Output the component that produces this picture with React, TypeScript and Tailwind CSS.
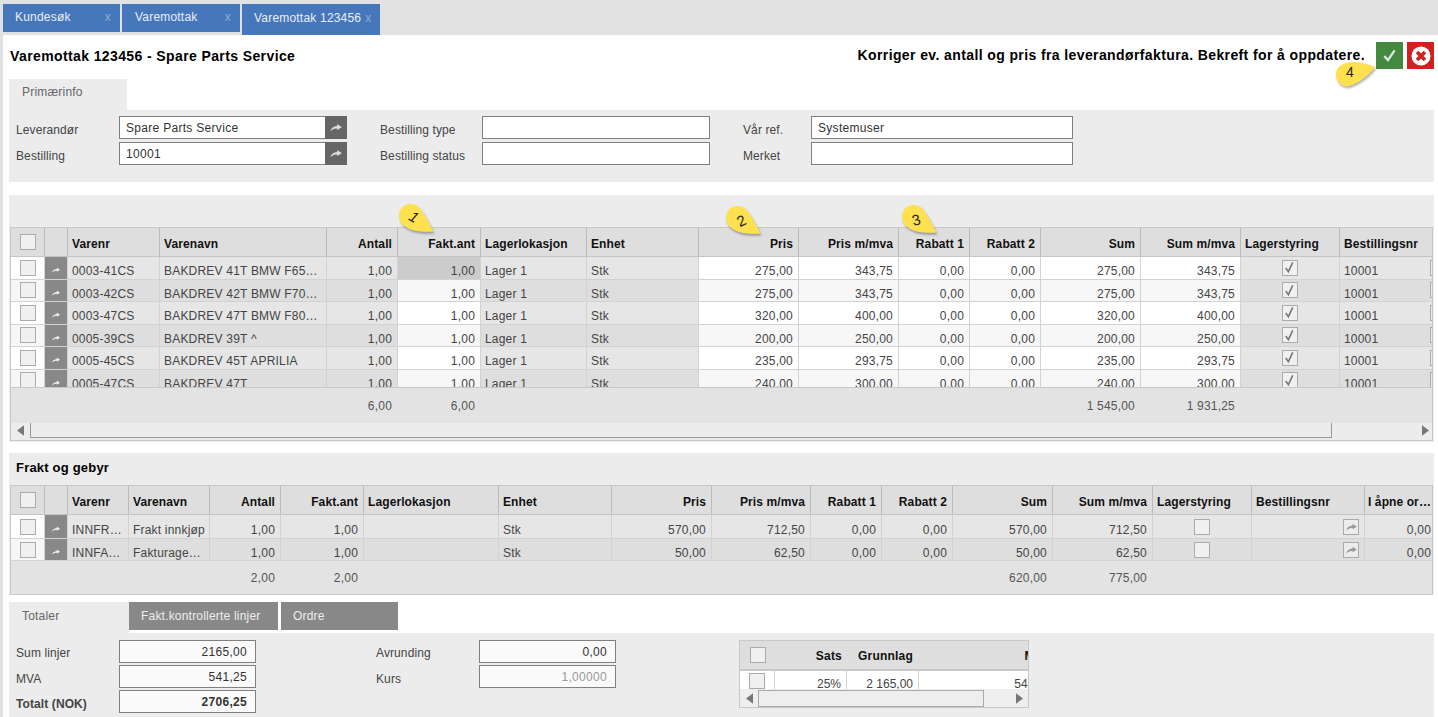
import type { ReactNode } from "react";

type Col = { label: string; w: string; align?: "right" | "center"; edit?: boolean };

const mainCols: Col[] = [
  { label: "Varenr", w: "w-[92px]" },
  { label: "Varenavn", w: "w-[167px]" },
  { label: "Antall", w: "w-[71px]", align: "right" },
  { label: "Fakt.ant", w: "w-[83px]", align: "right", edit: true },
  { label: "Lagerlokasjon", w: "w-[106px]" },
  { label: "Enhet", w: "w-[112px]" },
  { label: "Pris", w: "w-[100px]", align: "right", edit: true },
  { label: "Pris m/mva", w: "w-[100px]", align: "right", edit: true },
  { label: "Rabatt 1", w: "w-[71px]", align: "right", edit: true },
  { label: "Rabatt 2", w: "w-[71px]", align: "right", edit: true },
  { label: "Sum", w: "w-[100px]", align: "right", edit: true },
  { label: "Sum m/mva", w: "w-[100px]", align: "right", edit: true },
  { label: "Lagerstyring", w: "w-[99px]", align: "center" },
  { label: "Bestillingsnr", w: "w-[112px]" },
];

const feeCols: Col[] = [
  { label: "Varenr", w: "w-[61px]" },
  { label: "Varenavn", w: "w-[81px]" },
  { label: "Antall", w: "w-[71px]", align: "right" },
  { label: "Fakt.ant", w: "w-[83px]", align: "right" },
  { label: "Lagerlokasjon", w: "w-[135px]" },
  { label: "Enhet", w: "w-[113px]" },
  { label: "Pris", w: "w-[100px]", align: "right" },
  { label: "Pris m/mva", w: "w-[99px]", align: "right" },
  { label: "Rabatt 1", w: "w-[71px]", align: "right" },
  { label: "Rabatt 2", w: "w-[71px]", align: "right" },
  { label: "Sum", w: "w-[100px]", align: "right" },
  { label: "Sum m/mva", w: "w-[100px]", align: "right" },
  { label: "Lagerstyring", w: "w-[99px]", align: "center" },
  { label: "Bestillingsnr", w: "w-[113px]" },
  { label: "I åpne or…", w: "w-[72px]", align: "right" },
];

const mainRows = [
  ["0003-41CS", "BAKDREV 41T BMW F65…", "1,00", "1,00", "Lager 1", "Stk", "275,00", "343,75", "0,00", "0,00", "275,00", "343,75", "x", "10001"],
  ["0003-42CS", "BAKDREV 42T BMW F70…", "1,00", "1,00", "Lager 1", "Stk", "275,00", "343,75", "0,00", "0,00", "275,00", "343,75", "x", "10001"],
  ["0003-47CS", "BAKDREV 47T BMW F80…", "1,00", "1,00", "Lager 1", "Stk", "320,00", "400,00", "0,00", "0,00", "320,00", "400,00", "x", "10001"],
  ["0005-39CS", "BAKDREV 39T ^", "1,00", "1,00", "Lager 1", "Stk", "200,00", "250,00", "0,00", "0,00", "200,00", "250,00", "x", "10001"],
  ["0005-45CS", "BAKDREV 45T APRILIA", "1,00", "1,00", "Lager 1", "Stk", "235,00", "293,75", "0,00", "0,00", "235,00", "293,75", "x", "10001"],
  ["0005-47CS", "BAKDREV 47T", "1,00", "1,00", "Lager 1", "Stk", "240,00", "300,00", "0,00", "0,00", "240,00", "300,00", "x", "10001"],
];

const feeRows = [
  ["INNFR…", "Frakt innkjøp", "1,00", "1,00", "", "Stk", "570,00", "712,50", "0,00", "0,00", "570,00", "712,50", "o", "", "0,00"],
  ["INNFA…", "Fakturage…", "1,00", "1,00", "", "Stk", "50,00", "62,50", "0,00", "0,00", "50,00", "62,50", "o", "", "0,00"],
];

const mainFoot = ["", "", "6,00", "6,00", "", "", "", "", "", "", "1 545,00", "1 931,25", "", ""];
const feeFoot = ["", "", "2,00", "2,00", "", "", "", "", "", "", "620,00", "775,00", "", "", ""];

function Share({ className }: { className: string }) {
  return (
    <svg viewBox="0 0 14 10" className={className} fill="currentColor">
      <path d="M.6 9.6C1 6 3.6 3.6 8.4 3.2V1L13.8 4.6 8.4 8V6.2C5.2 5.8 2.6 7 .6 9.6Z" />
    </svg>
  );
}

function Box({ checked }: { checked?: boolean }) {
  return (
    <div className="flex h-4 w-4 shrink-0 items-center justify-center border border-[#ababab] bg-[#f0f0f0]">
      {checked && (
        <svg viewBox="0 0 14 14" className="h-[13px] w-[13px] text-[#777]" fill="none" stroke="currentColor" strokeWidth="1.7">
          <path d="M3 7.5 5.8 11.5 10.5 1.5" />
        </svg>
      )}
    </div>
  );
}

function cellAlign(align?: string) {
  if (align === "right") return "justify-end text-right";
  if (align === "center") return "justify-center";
  return "justify-start";
}

function HeaderRow({ cols }: { cols: Col[] }) {
  return (
    <div className="flex h-[29px] w-max border-b-[1px] border-[#c4c4c4] bg-[#dedede]">
      <div className="flex w-[34px] shrink-0 items-center justify-center border-r border-[#bbb] pb-[1px]">
        <Box />
      </div>
      <div className="w-[23px] shrink-0 border-r border-[#bbb]" />
      {cols.map((c) => (
        <div
          key={c.label}
          className={`${c.w} flex shrink-0 items-center border-r border-[#bbb] pl-[4px] pr-[5px] pt-[4px] font-bold text-[#111] ${cellAlign(c.align === "center" ? undefined : c.align)}`}
        >
          <span className="whitespace-nowrap tracking-[0.1px]">{c.label}</span>
        </div>
      ))}
    </div>
  );
}

function GridRow({ cols, row, i, h, selected }: { cols: Col[]; row: string[]; i: number; h: string; selected?: number }) {
  const odd = i % 2 === 0;
  return (
    <div className={`flex w-max ${h} border-b border-[#d2d2d2]`}>
      <div className={`flex w-[34px] shrink-0 items-center justify-center border-r border-[#d2d2d2] ${odd ? "bg-white" : "bg-[#f7f7f7]"}`}>
        <Box />
      </div>
      <div className="flex w-[23px] shrink-0 items-center justify-center border-r border-[#d2d2d2] bg-[#888] pt-[5px] text-[#eee]">
        <Share className="h-[6px] w-[10px]" />
      </div>
      {cols.map((c, n) => {
        const bg = selected === n ? "bg-[#cccccc]" : c.edit ? (odd ? "bg-white" : "bg-[#f7f7f7]") : odd ? "bg-[#e6e6e6]" : "bg-[#dedede]";
        const v = row[n];
        return (
          <div key={c.label} className={`${c.w} ${bg} flex shrink-0 items-center border-r border-[#d2d2d2] pl-[4px] pr-[5px] text-[#444] ${cellAlign(c.align)}`}>
            {v === "x" || v === "o" ? (
              <Box checked={v === "x"} />
            ) : (
              <span className="whitespace-nowrap pt-[7px] tracking-[0.2px]">{v}</span>
            )}
            {c.label === "Bestillingsnr" && (
              <div className="ml-auto flex h-4 w-4 shrink-0 items-center justify-center border border-[#aaa] bg-[#ececec] text-[#999]">
                <Share className="h-[8px] w-[11px]" />
              </div>
            )}
          </div>
        );
      })}
    </div>
  );
}

function FootRow({ cols, values, h }: { cols: Col[]; values: string[]; h: string }) {
  return (
    <div className={`flex w-max ${h} bg-[#e3e3e3]`}>
      <div className="w-[57px] shrink-0" />
      {cols.map((c, n) => (
        <div key={c.label} className={`${c.w} flex shrink-0 items-center justify-end pr-[6px] text-[#555]`}>
          <span className="whitespace-nowrap tracking-[0.2px]">{values[n]}</span>
        </div>
      ))}
    </div>
  );
}

function Arrow({ left }: { left?: boolean }) {
  return (
    <svg viewBox="0 0 8 12" className="h-[11px] w-[7px] text-[#777]" fill="currentColor">
      <path d={left ? "M8 0V12L0 6Z" : "M0 0V12L8 6Z"} />
    </svg>
  );
}

function Annotation({ pos, children, digit }: { pos: string; children: ReactNode; digit: string }) {
  return (
    <div className={`absolute ${pos} h-[31px] w-[37px]`}>
      <svg viewBox="0 0 37 31" className="h-full w-full drop-shadow-[1px_2px_1px_rgba(0,0,0,0.3)]">
        <path d="M35.5 28.5C26 29.5 14 28.5 7 23.5 0 18.5-.5 9.5 4 4.5 9-.5 17 0 21 4.5 27 11 31 20 35.5 28.5Z" fill="#ffe04f" />
      </svg>
      <span className={`absolute text-[15px] leading-none text-[#222] ${digit}`}>{children}</span>
    </div>
  );
}

function Field({ value, arrow, right, bold, dim }: { value?: string; arrow?: boolean; right?: boolean; bold?: boolean; dim?: boolean }) {
  return (
    <div className={`flex h-[23px] border border-[#808080] ${right ? "bg-[#fafafa]" : "bg-white"}`}>
      <div className={`flex-1 truncate pl-[6px] pt-[2px] leading-[19px] tracking-[0.3px] ${right ? "pr-[8px] text-right" : "pr-[6px]"} ${bold ? "font-bold" : ""} ${dim ? "text-[#999]" : "text-[#333]"}`}>
        {value}
      </div>
      {arrow && (
        <div className="flex w-[22px] -my-px -mr-px items-center justify-center bg-[#666] text-[#ddd]">
          <Share className="h-[9px] w-[12px]" />
        </div>
      )}
    </div>
  );
}

function Label({ children, bold, className }: { children: ReactNode; bold?: boolean; className?: string }) {
  return (
    <div className={`flex h-[23px] items-center pt-[4px] tracking-[0.1px] text-[#444] ${bold ? "font-bold text-[#222]" : ""} ${className ?? ""}`}>
      {children}
    </div>
  );
}

export default function App() {
  return (
    <div className="relative flex h-[717px] w-[1438px] flex-col overflow-hidden bg-[#e2e2e2] font-['Liberation_Sans',Arial,sans-serif] text-[12px]">
      <div className="flex h-[35px] shrink-0 items-start gap-[2px] pl-[3px] pt-[4px] text-[#e8eef8] tracking-[0.2px]">
        <div className="flex h-[28px] w-[117px] items-center justify-between bg-[#4677bb] pb-[2px] pl-[12px] pr-[9px]">
          <span>Kundesøk</span>
          <span className="text-[#8fabd6]">x</span>
        </div>
        <div className="flex h-[28px] w-[118px] items-center justify-between bg-[#4677bb] pb-[2px] pl-[13px] pr-[9px]">
          <span>Varemottak</span>
          <span className="text-[#8fabd6]">x</span>
        </div>
        <div className="flex h-[31px] w-[138px] items-center gap-[4px] bg-[#4677bb] pb-[4px] pl-[12px]">
          <span>Varemottak 123456</span>
          <span className="text-[#8fabd6]">x</span>
        </div>
      </div>

      <div className="ml-[3px] flex min-h-0 flex-1 flex-col bg-white pl-[6px] pr-[4px]">
        <div className="flex h-[44px] shrink-0 items-start justify-between pt-[7px]">
          <h1 className="pl-px pt-[5px] text-[14px] font-bold leading-[18px] tracking-[0.39px] text-black">
            Varemottak 123456 - Spare Parts Service
          </h1>
          <div className="flex items-center">
            <span className="mr-[11px] text-[14px] font-bold tracking-[0.39px] text-black">
              Korriger ev. antall og pris fra leverandørfaktura. Bekreft for å oppdatere.
            </span>
            <div className="flex h-[27px] w-[27px] items-center justify-center bg-[#43893f] text-[#e0ebde]">
              <svg viewBox="0 0 16 16" className="h-[15px] w-[15px]" fill="none" stroke="currentColor" strokeWidth="2.4">
                <path d="M2.5 8.5 6.3 13 13.5 2.5" />
              </svg>
            </div>
            <div className="ml-[4px] flex h-[27px] w-[27px] items-center justify-center bg-[#d02020]">
              <svg viewBox="0 0 20 20" className="h-[20px] w-[20px]">
                <circle cx="10" cy="10" r="9.5" fill="#fff" />
                <path d="M6 6 14 14M14 6 6 14" stroke="#d02020" strokeWidth="3.6" />
              </svg>
            </div>
          </div>
        </div>

        <div className="flex h-[31px] w-[118px] shrink-0 items-center bg-[#ececec] pb-[6px] pl-[13px] tracking-[0.2px] text-[#666]">
          Primærinfo
        </div>
        <div className="grid h-[72px] shrink-0 grid-cols-[103px_228px_102px_228px_68px_262px] content-start gap-y-[3px] bg-[#ececec] pl-[7px] pt-[6px]">
          <Label>Leverandør</Label>
          <Field value="Spare Parts Service" arrow />
          <Label className="ml-[33px] -mr-[33px]">Bestilling type</Label>
          <div className="ml-[33px] -mr-[33px]"><Field /></div>
          <Label className="ml-[66px] -mr-[66px]">Vår ref.</Label>
          <div className="ml-[66px] -mr-[66px]"><Field value="Systemuser" /></div>
          <Label>Bestilling</Label>
          <Field value="10001" arrow />
          <Label className="ml-[33px] -mr-[33px]">Bestilling status</Label>
          <div className="ml-[33px] -mr-[33px]"><Field /></div>
          <Label className="ml-[66px] -mr-[66px]">Merket</Label>
          <div className="ml-[66px] -mr-[66px]"><Field /></div>
        </div>

        <div className="mt-[13px] h-[247px] shrink-0 bg-[#ececec] px-px pt-[32px]">
          <div className="h-[214px] overflow-hidden border border-[#c8c8c8]">
            <HeaderRow cols={mainCols} />
            <div className="h-[130px] overflow-hidden">
              {mainRows.map((row, i) => (
                <GridRow key={row[0]} cols={mainCols} row={row} i={i} h="h-[22.5px]" selected={i === 0 ? 3 : undefined} />
              ))}
            </div>
            <div className="border-t border-[#c8c8c8]">
              <FootRow cols={mainCols} values={mainFoot} h="h-[35px]" />
            </div>
            <div className="flex h-[17px] items-start">
              <div className="flex h-[15px] w-[19px] items-center justify-center"><Arrow left /></div>
              <div className="h-[15px] w-[1302px] border-x border-b border-[#999]" />
              <div className="flex h-[15px] flex-1 items-center justify-end pr-[3px]"><Arrow /></div>
            </div>
          </div>
        </div>

        <div className="mt-[11px] h-[142px] shrink-0 bg-[#ececec] px-px">
          <div className="flex h-[32px] items-center pb-[3px] pl-[6px] text-[13px] font-bold tracking-[0.2px] text-black">Frakt og gebyr</div>
          <div className="h-[110px] overflow-hidden border border-[#c8c8c8]">
            <HeaderRow cols={feeCols} />
            <GridRow cols={feeCols} row={feeRows[0]} i={0} h="h-[24px]" />
            <GridRow cols={feeCols} row={feeRows[1]} i={1} h="h-[22px]" />
            <FootRow cols={feeCols} values={feeFoot} h="h-[33px]" />
          </div>
        </div>

        <div className="mt-[7px] flex h-[31px] shrink-0 items-start">
          <div className="flex h-[31px] w-[120px] items-center bg-[#ececec] pb-[3px] pl-[13px] tracking-[0.2px] text-[#666]">Totaler</div>
          <div className="flex h-[28px] w-[149px] items-center bg-[#888] pl-[12px] tracking-[0.2px] text-[#eee]">Fakt.kontrollerte linjer</div>
          <div className="ml-[3px] flex h-[28px] w-[117px] items-center bg-[#888] pl-[12px] tracking-[0.2px] text-[#eee]">Ordre</div>
        </div>

        <div className="flex min-h-0 flex-1 items-start bg-[#ececec] pl-[7px] pt-[7px]">
          <div className="grid w-[240px] grid-cols-[103px_137px] gap-y-[2px]">
            <Label className="-mt-px">Sum linjer</Label>
            <Field value="2165,00" right />
            <Label>MVA</Label>
            <Field value="541,25" right />
            <Label bold>Totalt (NOK)</Label>
            <Field value="2706,25" right bold />
          </div>
          <div className="ml-[120px] grid w-[240px] grid-cols-[103px_137px] gap-y-[2px]">
            <Label className="-mt-px">Avrunding</Label>
            <Field value="0,00" right />
            <Label>Kurs</Label>
            <Field value="1,00000" right dim />
          </div>
          <div className="ml-[123px] h-[68px] w-[290px] overflow-hidden border border-[#c8c8c8]">
            <div className="flex h-[30px] w-max border-b-2 border-[#c8c8c8] bg-[#dedede] font-bold tracking-[0.2px] text-[#111]">
              <div className="flex w-[35px] items-center justify-center"><Box /></div>
              <div className="flex w-[72px] items-center justify-end pr-[5px] pt-[2px]">Sats</div>
              <div className="flex w-[72px] items-center justify-end pr-[6px] pt-[2px]">Grunnlag</div>
              <div className="flex w-[137px] items-center justify-end pr-[5px] pt-[2px]">MVA</div>
            </div>
            <div className="flex h-[18px] w-max overflow-hidden bg-white text-[#444]">
              <div className="flex w-[35px] justify-center border-r border-[#d2d2d2] pt-[2px]"><Box /></div>
              <div className="flex w-[72px] items-start justify-end border-r border-[#d2d2d2] pr-[5px] pt-[4px]">25%</div>
              <div className="flex w-[72px] items-start justify-end border-r border-[#d2d2d2] pr-[5px] pt-[4px]">2 165,00</div>
              <div className="flex w-[137px] items-start justify-end pr-[5px] pt-[4px]">541,25</div>
            </div>
            <div className="flex h-[18px] items-center bg-[#eee]">
              <div className="flex w-[18px] justify-center"><Arrow left /></div>
              <div className="h-[17px] w-[226px] border border-[#aaa]" />
              <div className="flex flex-1 justify-end pr-[5px]"><Arrow /></div>
            </div>
          </div>
        </div>
      </div>

      <Annotation pos="left-[398px] top-[203px]" digit="left-[12px] top-[6px] rotate-[30deg] italic">1</Annotation>
      <Annotation pos="left-[725px] top-[205px]" digit="left-[12px] top-[8px] -rotate-[25deg]">2</Annotation>
      <Annotation pos="left-[901px] top-[204px]" digit="left-[11px] top-[8px] -rotate-[15deg]">3</Annotation>
      <div className="absolute left-[1335px] top-[62px] h-[25px] w-[41px]">
        <svg viewBox="0 0 41 25" className="h-full w-full drop-shadow-[1px_2px_1px_rgba(0,0,0,0.3)]">
          <path d="M40.5 5C33 14 24 21 14 24 6 26 0 18 1 11 2 3 11 0 19 0 27 0 34 3 40.5 5Z" fill="#ffe04f" />
        </svg>
        <span className="absolute left-[11px] top-[3px] text-[14px] leading-none text-[#222]">4</span>
      </div>
    </div>
  );
}
